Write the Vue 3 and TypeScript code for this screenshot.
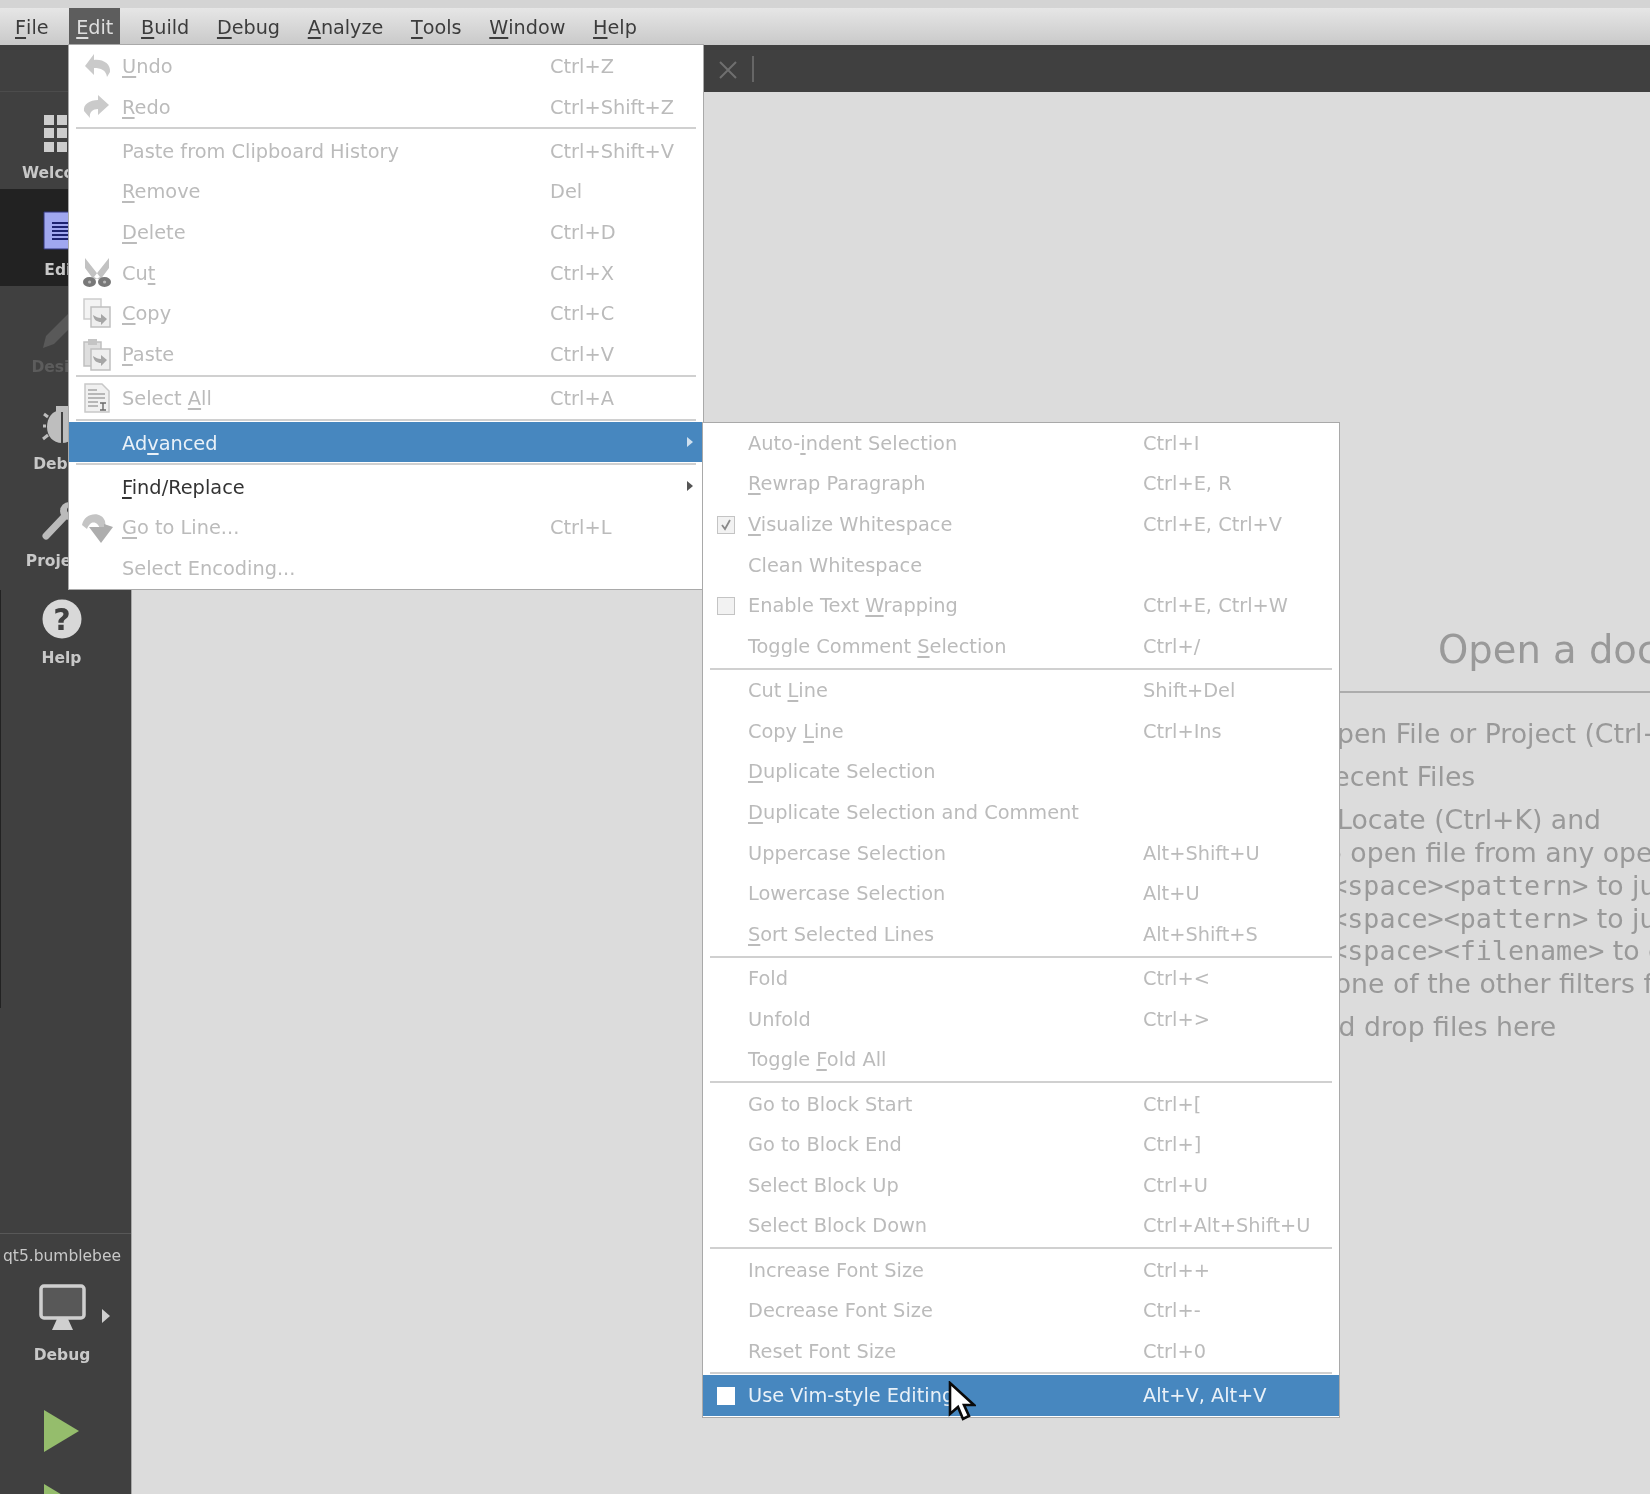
<script setup lang="ts">
interface Item { sep?: boolean; label?: string; key?: string; icon?: string; check?: 'on' | 'off'; on?: boolean; dark?: boolean; sub?: boolean }
interface Shape { d: string; fill?: string; stroke?: string; w?: number }

const menuNames = ['&File', '&Edit', '&Build', '&Debug', '&Analyze', '&Tools', '&Window', '&Help']

// "&" marks the mnemonic letter that Qt underlines
function parts(text: string): [string, string, string] {
  const i = text.indexOf('&')
  if (i < 0) return [text, '', '']
  return [text.slice(0, i), text.charAt(i + 1), text.slice(i + 2)]
}

const sep: Item = { sep: true }
const editMenu: Item[] = [
  { label: '&Undo', key: 'Ctrl+Z', icon: 'undo' },
  { label: '&Redo', key: 'Ctrl+Shift+Z', icon: 'redo' },
  sep,
  { label: 'Paste from Clipboard History', key: 'Ctrl+Shift+V' },
  { label: '&Remove', key: 'Del' },
  { label: '&Delete', key: 'Ctrl+D' },
  { label: 'Cu&t', key: 'Ctrl+X', icon: 'cut' },
  { label: '&Copy', key: 'Ctrl+C', icon: 'copy' },
  { label: '&Paste', key: 'Ctrl+V', icon: 'paste' },
  sep,
  { label: 'Select &All', key: 'Ctrl+A', icon: 'all' },
  sep,
  { label: 'Ad&vanced', on: true, sub: true },
  sep,
  { label: '&Find/Replace', dark: true, sub: true },
  { label: '&Go to Line...', key: 'Ctrl+L', icon: 'goto' },
  { label: 'Select Encoding...' },
]
const advancedMenu: Item[] = [
  { label: 'Auto-&indent Selection', key: 'Ctrl+I' },
  { label: '&Rewrap Paragraph', key: 'Ctrl+E, R' },
  { label: '&Visualize Whitespace', key: 'Ctrl+E, Ctrl+V', check: 'on' },
  { label: 'Clean Whitespace' },
  { label: 'Enable Text &Wrapping', key: 'Ctrl+E, Ctrl+W', check: 'off' },
  { label: 'Toggle Comment &Selection', key: 'Ctrl+/' },
  sep,
  { label: 'Cut &Line', key: 'Shift+Del' },
  { label: 'Copy &Line', key: 'Ctrl+Ins' },
  { label: '&Duplicate Selection' },
  { label: '&Duplicate Selection and Comment' },
  { label: 'Uppercase Selection', key: 'Alt+Shift+U' },
  { label: 'Lowercase Selection', key: 'Alt+U' },
  { label: '&Sort Selected Lines', key: 'Alt+Shift+S' },
  sep,
  { label: 'Fold', key: 'Ctrl+<' },
  { label: 'Unfold', key: 'Ctrl+>' },
  { label: 'Toggle &Fold All' },
  sep,
  { label: 'Go to Block Start', key: 'Ctrl+[' },
  { label: 'Go to Block End', key: 'Ctrl+]' },
  { label: 'Select Block Up', key: 'Ctrl+U' },
  { label: 'Select Block Down', key: 'Ctrl+Alt+Shift+U' },
  sep,
  { label: 'Increase Font Size', key: 'Ctrl++' },
  { label: 'Decrease Font Size', key: 'Ctrl+-' },
  { label: 'Reset Font Size', key: 'Ctrl+0' },
  sep,
  { label: 'Use Vim-style Editing', key: 'Alt+V, Alt+V', check: 'off', on: true },
]
const panels = [
  { name: 'edit', items: editMenu },
  { name: 'advanced', items: advancedMenu },
]

const swirl = 'M24 20l-6 6v-3c-4 0-7-2-8-7 3 2 5 3 8 3v-4z'
const icons: Record<string, Shape[]> = {
  undo: [{ d: 'M2 15L11 3v6c9-1 17 4 16 12l-3 5c-1-7-6-9-13-9v7z', fill: '#cacaca' }],
  redo: [{ d: 'M26 13L15 3v5C7 8 0 12 1 19l6 7c-1-6 3-9 8-9v6z', fill: '#cacaca' }],
  cut: [
    { d: 'M2 0l15 19-6 3L2 10zM26 0L11 19l6 3 9-12z', fill: '#c2c2c2' },
    { d: 'M0 24a6.5 5 0 1 0 13 0a6.5 5 0 1 0-13 0zM15 24a6.5 5 0 1 0 13 0a6.5 5 0 1 0-13 0z', fill: '#787878' },
    { d: 'M5 24a1.6 1.6 0 1 0 3.2 0a1.6 1.6 0 1 0-3.2 0zM20 24a1.6 1.6 0 1 0 3.2 0a1.6 1.6 0 1 0-3.2 0z', fill: '#b8b8b8' },
  ],
  copy: [
    { d: 'M1 0h17v20H1z', fill: '#f3f3f3', stroke: '#cdcdcd', w: 1.5 },
    { d: 'M8 8h19v20H8z', fill: '#eeeeee', stroke: '#c0c0c0', w: 1.5 },
    { d: swirl, fill: '#a6a6a6' },
  ],
  paste: [
    { d: 'M1 2h17v24H1z', fill: '#dedede', stroke: '#c0c0c0', w: 1.5 },
    { d: 'M5-1h9v6H5z', fill: '#c4c4c4' },
    { d: 'M8 9h19v21H8z', fill: '#eeeeee', stroke: '#c0c0c0', w: 1.5 },
    { d: swirl, fill: '#a6a6a6' },
  ],
  all: [
    { d: 'M2 0h17l7 7v21H2z', fill: '#f0f0f0', stroke: '#c8c8c8', w: 1.5 },
    { d: 'M5 6h9M5 10h17M5 14h17M5 18h10M5 22h10', stroke: '#a4a4a4', w: 1.4 },
    { d: 'M17 19h6M17 26h6M20 19v7', stroke: '#6a6a6a', w: 1.4 },
  ],
  goto: [
    { d: 'M-1 12C1 0 18-3 22 8l1 8h-6C15 9 8 6 4 16z', fill: '#c4c4c4' },
    { d: 'M12 14h9v-3l9 3L18 30 6 14z', fill: '#adadad' },
  ],
}
</script>

<template>
  <div class="screen">
    <div class="strip"></div>
    <nav class="menubar">
      <span v-for="n in menuNames" :key="n" class="top" :class="{ open: n === '&Edit' }"><u>{{ parts(n)[1] }}</u>{{ parts(n)[2] }}</span>
    </nav>

    <div class="body">
      <aside class="sidebar">
        <i class="edge"></i>
        <div class="side-head"></div>

        <div class="mode">
          <svg width="60" height="44" viewBox="0 0 60 44">
            <path fill="#cdcdcd" d="M12 3h10v10H12zM25 3h10v10H25zM38 3h10v10H38zM12 16h10v10H12zM25 16h10v10H25zM38 16h10v10H38zM12 30h10v10H12zM25 30h10v10H25zM38 30h10v10H38z" />
          </svg>
          <span>Welcome</span>
        </div>
        <div class="mode active">
          <svg width="60" height="44" viewBox="0 0 60 44">
            <path fill="#a0a7ef" stroke="#30357c" stroke-width="1" d="M12 3h36v37H12z" />
            <path stroke="#1d2270" stroke-width="2" d="M20 14h22M20 18h22M20 22h22M20 26h22M20 30h22" />
          </svg>
          <span>Edit</span>
        </div>
        <div class="mode dim">
          <svg width="60" height="44" viewBox="0 0 60 44">
            <path fill="#595959" d="M11 42l3-12L36 8l8 8-22 22z" />
          </svg>
          <span>Design</span>
        </div>
        <div class="mode">
          <svg width="60" height="44" viewBox="0 0 60 44">
            <path fill="#bebebe" d="M30 7c10 0 15 8 15 17s-6 16-15 16-15-7-15-16S20 7 30 7zM24 3h12v6H24z" />
            <path stroke="#bebebe" stroke-width="3" fill="none" d="M16 14l-4-3M14 23h-3M16 32l-5 4" />
            <path stroke="#404040" stroke-width="2" d="M30 9v31" />
          </svg>
          <span>Debug</span>
        </div>
        <div class="mode">
          <svg width="60" height="44" viewBox="0 0 60 44">
            <path fill="none" stroke="#bbb" stroke-width="7" stroke-linecap="round" d="M14 36l18-19" />
            <circle cx="37" cy="11" r="9" fill="#bbb" />
            <circle cx="38" cy="10" r="3" fill="#404040" />
          </svg>
          <span>Projects</span>
        </div>
        <div class="mode">
          <svg width="60" height="44" viewBox="0 0 60 44">
            <circle cx="30" cy="22" r="19.5" fill="#d8d8d8" />
            <text x="30" y="33" class="q">?</text>
          </svg>
          <span>Help</span>
        </div>

        <div class="kit">
          <div class="kit-name">qt5.bumblebee</div>
          <svg class="monitor" width="132" height="50" viewBox="0 0 132 50">
            <rect x="41" y="3" width="43" height="32" rx="3" fill="#585858" stroke="#cfcfcf" stroke-width="3.5" />
            <path fill="#cfcfcf" d="M57 36h11l5 11H52z" />
            <path fill="#cfcfcf" d="M102 26l8 7-8 7z" />
          </svg>
          <div class="kit-mode">Debug</div>
          <svg class="play" width="132" height="42" viewBox="0 0 132 42">
            <path fill="#95bd6c" d="M44 0l35 21-35 21z" />
          </svg>
          <svg class="play second" width="132" height="42" viewBox="0 0 132 42">
            <path fill="#95bd6c" d="M44 0l35 21-35 21z" />
          </svg>
        </div>
      </aside>

      <main class="main">
        <div class="tabbar">
          <svg class="close" width="22" height="22" viewBox="0 0 22 22">
            <path d="M3 3l16 16M19 3L3 19" stroke="#6f6f6f" stroke-width="2" />
          </svg>
          <i class="tab-div"></i>
        </div>
        <section class="doc">
          <h1>Open a document</h1>
          <hr />
          <ul>
            <li>File &gt; Open File or Project (Ctrl+O)</li>
            <li>File &gt; Recent Files</li>
            <li>
              Tools &gt; Locate (Ctrl+K) and
              <ul class="inner">
                <li>type to open file from any open project</li>
                <li>type <code>c&lt;space&gt;&lt;pattern&gt;</code> to jump to a class definition</li>
                <li>type <code>m&lt;space&gt;&lt;pattern&gt;</code> to jump to a method definition</li>
                <li>type <code>f&lt;space&gt;&lt;filename&gt;</code> to open file from file system</li>
                <li>select one of the other filters for jumping to a location</li>
              </ul>
            </li>
            <li>Drag and drop files here</li>
          </ul>
        </section>
      </main>
    </div>

    <div v-for="p in panels" :key="p.name" class="popup" :class="p.name">
      <template v-for="(it, i) in p.items" :key="i">
        <div v-if="it.sep" class="sep"></div>
        <div v-else class="row" :class="{ on: it.on, dark: it.dark }">
          <span class="lead">
            <svg v-if="it.icon" class="icon" width="28" height="28" viewBox="0 0 28 28">
              <path v-for="(s, j) in icons[it.icon]" :key="j" :d="s.d" :fill="s.fill || 'none'" :stroke="s.stroke" :stroke-width="s.w" />
            </svg>
            <span v-if="it.check" class="box">
              <svg v-if="it.check === 'on'" width="14" height="14" viewBox="0 0 14 14">
                <path d="M3 7l3 4 5-9" fill="none" stroke="#8a8a8a" stroke-width="1.8" />
              </svg>
            </span>
          </span>
          <span class="label">{{ parts(it.label!)[0] }}<u>{{ parts(it.label!)[1] }}</u>{{ parts(it.label!)[2] }}</span>
          <span class="key">{{ it.key }}</span>
          <span v-if="it.sub" class="more"></span>
        </div>
      </template>
    </div>

    <svg class="cursor" width="28" height="44" viewBox="0 0 28 44">
      <path d="M2 2v31l8-7 5 12 6-3-5-11h10z" fill="#fff" stroke="#0a0a0a" stroke-width="2.6" />
    </svg>
  </div>
</template>

<style scoped>
.screen {
  position: relative;
  width: 1650px;
  height: 1494px;
  overflow: hidden;
  display: flex;
  flex-direction: column;
  background: #dcdcdc;
  font-family: "DejaVu Sans", sans-serif;
  filter: blur(0.6px);
}
.strip { height: 8px; background: #d4d4d4; flex: none; }
.menubar {
  height: 37px;
  flex: none;
  display: flex;
  gap: 13.7px;
  padding-left: 8px;
  background: linear-gradient(#e6e6e6, #c9c9c9);
  font-size: 19.2px;
  color: #3c3c3c;
}
.top { display: flex; align-items: center; padding: 2px 7px 0; }
.top.open { background: #5d5d5d; color: #dedede; }
u { text-underline-offset: 3px; text-decoration-thickness: 1.5px; }

.body { flex: 1; display: flex; min-height: 0; }
.sidebar {
  position: relative;
  width: 132px;
  flex: none;
  display: flex;
  flex-direction: column;
  background: #404040;
  border-right: 1px solid #a8a8a8;
  box-sizing: border-box;
  color: #c8c8c8;
}
.edge { position: absolute; left: 0; top: 545px; width: 1px; height: 418px; background: #222; }
.side-head { height: 47px; flex: none; border-bottom: 1px solid #4c4c4c; box-sizing: border-box; }
.mode {
  height: 97px;
  flex: none;
  padding: 20px 8px 0 0;
  box-sizing: border-box;
  display: flex;
  flex-direction: column;
  align-items: center;
  gap: 7px;
  font-size: 15.5px;
  font-weight: 700;
  line-height: 21px;
}
.mode.active { background: #222; }
.mode.dim { color: #5c5c5c; }
.q { font: 700 30px "DejaVu Sans", sans-serif; fill: #404040; text-anchor: middle; }
.kit {
  margin-top: auto;
  height: 261px;
  flex: none;
  box-sizing: border-box;
  border-top: 1px solid #585858;
  padding-top: 12px;
  display: flex;
  flex-direction: column;
  overflow: hidden;
}
.kit-name { font-size: 15.5px; line-height: 21px; text-align: center; white-space: nowrap; padding-right: 7px; }
.monitor { margin-top: 16px; flex: none; }
.kit-mode { margin-top: 12px; font-size: 15.5px; font-weight: 700; line-height: 21px; text-align: center; padding-right: 7px; }
.play { margin-top: 44px; flex: none; }
.play.second { margin-top: 32px; }

.main { flex: 1; min-width: 0; display: flex; flex-direction: column; }
.tabbar { height: 47px; flex: none; display: flex; align-items: center; background: #404040; padding-left: 585px; }
.close { flex: none; margin-top: 2px; }
.tab-div { width: 2px; height: 26px; margin-left: 13px; background: #666; }
.doc { flex: 1; padding-top: 534px; color: #999; white-space: nowrap; overflow: hidden; }
.doc h1 { margin: 0 0 0 1306px; font-size: 38.5px; font-weight: 400; line-height: 48px; }
.doc hr { margin: 17px 0 25px 1000px; border: 0; height: 2px; background: #acacac; }
.doc ul { margin: 0; padding: 0 0 0 1100px; list-style: none; font-size: 26.7px; line-height: 32.7px; }
.doc > ul > li { margin-bottom: 10.5px; }
.doc .inner { padding-left: 15px; }
.doc code { font-family: "DejaVu Sans Mono", monospace; font-size: 26.7px; }

.popup {
  position: absolute;
  box-sizing: border-box;
  background: #fff;
  box-shadow: 0 0 0 1px #a9a9a9;
  font-size: 19.35px;
  color: #bbb;
}
.popup.edit { left: 69px; top: 45px; width: 634px; height: 544px; }
.popup.advanced { left: 703px; top: 423px; width: 636px; height: 994px; }
.row { height: 40.7px; display: grid; align-items: center; position: relative; white-space: nowrap; }
.edit .row { grid-template-columns: 53px 428px 1fr; }
.edit .label, .edit .key { padding-top: 2px; }
.advanced .row { height: 40.65px; grid-template-columns: 45px 395px 1fr; }
.row.on { background: #4787bf; color: #e9f1f8; }
.row.dark { color: #333; }
.sep { height: 3.5px; margin: 0 7px; display: flex; align-items: center; }
.sep::before { content: ""; flex: 1; height: 2px; background: #d0d0d0; }
.lead { display: flex; align-items: center; height: 100%; }
.icon { margin-left: 14px; overflow: visible; }
.box {
  margin-left: 14px;
  width: 18px;
  height: 18px;
  box-sizing: border-box;
  background: #f2f2f2;
  border: 1px solid #c4c4c4;
  display: flex;
  align-items: center;
  justify-content: center;
}
.on .box { background: #fff; border-color: #fff; }
.more {
  position: absolute;
  right: 10px;
  top: 50%;
  margin-top: -5px;
  border-left: 6px solid #cfe0ef;
  border-top: 5px solid transparent;
  border-bottom: 5px solid transparent;
}
.dark .more { border-left-color: #555; }
.cursor { position: absolute; left: 948px; top: 1381px; }
</style>
